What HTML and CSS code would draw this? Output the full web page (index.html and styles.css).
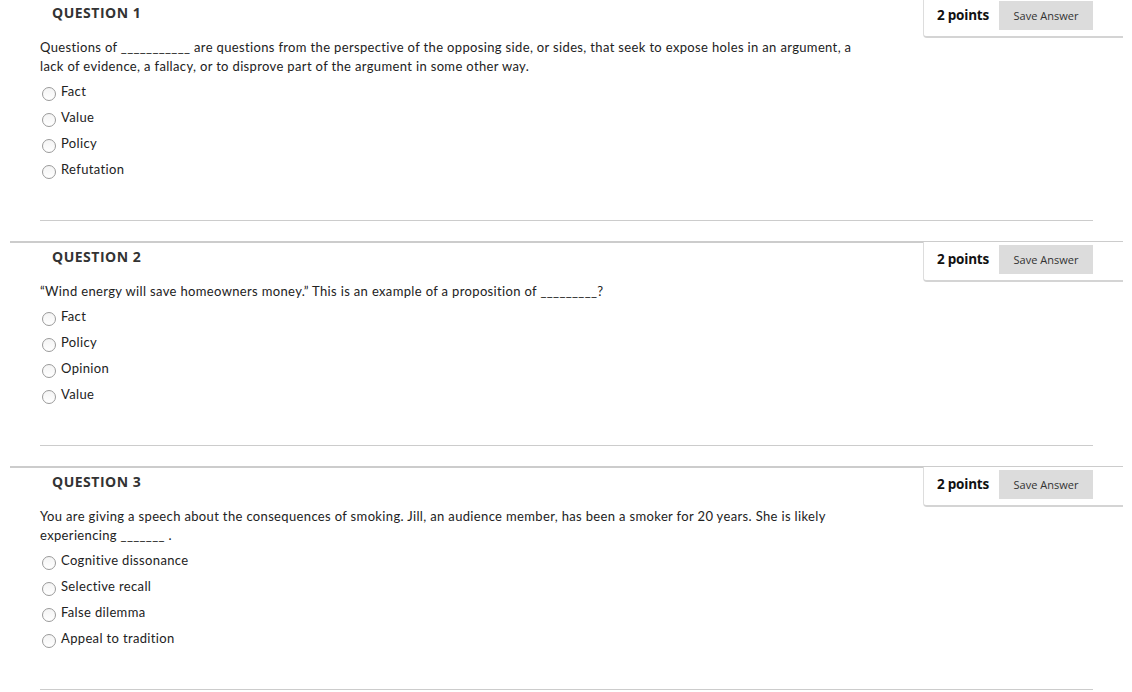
FILE: index.html
```html
<!DOCTYPE html>
<html>
<head>
<meta charset="utf-8">
<link rel="stylesheet" href="styles.css">
</head>
<body>
<div class="page">
  <section class="question q-first">
    <div class="q-head">
      <h3 class="q-title">QUESTION 1</h3>
      <div class="points-box">
        <span class="points">2 points</span>
        <button class="save-btn">Save Answer</button>
      </div>
    </div>
    <div class="q-body">
      <p class="q-text">Questions of ___________ are questions from the perspective of the opposing side, or sides, that seek to expose holes in an argument, a lack of evidence, a fallacy, or to disprove part of the argument in some other way.</p>
      <ul class="options">
        <li class="option"><span class="radio"></span><span class="label">Fact</span></li>
        <li class="option"><span class="radio"></span><span class="label">Value</span></li>
        <li class="option"><span class="radio"></span><span class="label">Policy</span></li>
        <li class="option"><span class="radio"></span><span class="label">Refutation</span></li>
      </ul>
    </div>
    <hr class="sep">
  </section>

  <section class="question">
    <div class="q-head">
      <h3 class="q-title">QUESTION 2</h3>
      <div class="points-box">
        <span class="points">2 points</span>
        <button class="save-btn">Save Answer</button>
      </div>
    </div>
    <div class="q-body">
      <p class="q-text">“Wind energy will save homeowners money.” This is an example of a proposition of _________?</p>
      <ul class="options">
        <li class="option"><span class="radio"></span><span class="label">Fact</span></li>
        <li class="option"><span class="radio"></span><span class="label">Policy</span></li>
        <li class="option"><span class="radio"></span><span class="label">Opinion</span></li>
        <li class="option"><span class="radio"></span><span class="label">Value</span></li>
      </ul>
    </div>
    <hr class="sep">
  </section>

  <section class="question">
    <div class="q-head">
      <h3 class="q-title">QUESTION 3</h3>
      <div class="points-box">
        <span class="points">2 points</span>
        <button class="save-btn">Save Answer</button>
      </div>
    </div>
    <div class="q-body">
      <p class="q-text">You are giving a speech about the consequences of smoking. Jill, an audience member, has been a smoker for 20 years. She is likely experiencing _______ .</p>
      <ul class="options">
        <li class="option"><span class="radio"></span><span class="label">Cognitive dissonance</span></li>
        <li class="option"><span class="radio"></span><span class="label">Selective recall</span></li>
        <li class="option"><span class="radio"></span><span class="label">False dilemma</span></li>
        <li class="option"><span class="radio"></span><span class="label">Appeal to tradition</span></li>
      </ul>
    </div>
    <hr class="sep">
  </section>
</div>
</body>
</html>
```

FILE: styles.css
```css
html, body {
  margin: 0;
  padding: 0;
  background: #fff;
}

body {
  font-family: "Lato", "Open Sans", sans-serif;
  color: #333;
  overflow: hidden;
}

.page {
  padding: 0 9px 0 10px;
}

.question {
  border-top: 2px solid #ccc;
  padding-bottom: 20px;
}

.q-first {
  margin-top: -3px;
}

.q-head {
  display: flex;
  justify-content: space-between;
  align-items: flex-start;
  height: 39px;
}

.q-title {
  margin: 0;
  padding: 4px 0 0 42px;
  font-family: "Open Sans", sans-serif;
  font-weight: 700;
  font-size: 14px;
  letter-spacing: 0.5px;
  line-height: 20px;
  color: #333;
}

.points-box {
  display: flex;
  align-items: flex-start;
  gap: 10px;
  height: 40px;
  margin-top: -1px;
  padding: 3px 30px 0 13px;
  border-left: 1px solid #ddd;
  border-bottom: 2px solid #d4d4d4;
  border-bottom-left-radius: 4px;
  box-sizing: border-box;
  background: #fff;
  position: relative;
  z-index: 1;
}

.points {
  font-family: "Open Sans", sans-serif;
  font-weight: 700;
  font-size: 13.5px;
  line-height: 29px;
  color: #111;
  letter-spacing: -0.2px;
}

.save-btn {
  width: 94px;
  height: 29px;
  border: none;
  background: #dcdcdc;
  font-family: "Open Sans", sans-serif;
  font-size: 11px;
  color: #333;
  padding: 0;
}

.q-body {
  padding: 0 30px;
}

.q-text {
  margin: 0;
  max-width: 822px;
  font-size: 13px;
  letter-spacing: 0.35px;
  line-height: 19px;
  color: #222;
}

.options {
  list-style: none;
  margin: 3px 0 0 0;
  padding: 0;
}

.option {
  display: flex;
  align-items: center;
  height: 26px;
  font-size: 13px;
  letter-spacing: 0.35px;
  color: #222;
}

.radio {
  width: 12px;
  height: 12px;
  border: 1px solid #9a9a9a;
  border-radius: 50%;
  background: linear-gradient(#f4f4f4, #fff);
  margin: 4px 5px 0 2px;
  box-sizing: content-box;
  flex: none;
}

.label {
  line-height: 19px;
  margin-top: -2px;
}

.sep {
  margin: 37px 30px 0 30px;
  border: none;
  border-top: 1px solid #ccc;
  height: 0;
}
```
